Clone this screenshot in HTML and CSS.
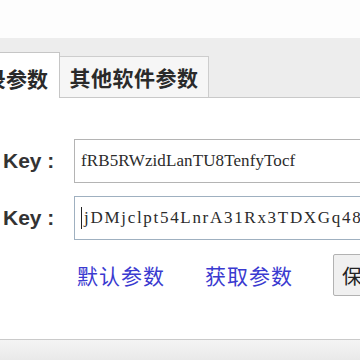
FILE: index.html
```html
<!DOCTYPE html>
<html lang="zh">
<head>
<meta charset="utf-8">
<link rel="stylesheet" href="styles.css">
</head>
<body>
<div class="window">
  <div class="top"></div>
  <div class="tabbar">
    <div class="tab active"><span class="tab-text cut">录参数</span></div>
    <div class="tab"><span class="tab-text">其他软件参数</span></div>
  </div>
  <div class="content">
    <div class="row first">
      <span class="label">Key :</span>
      <div class="field"><span class="value v1">fRB5RWzidLanTU8TenfyTocf</span></div>
    </div>
    <div class="row second">
      <span class="label">Key :</span>
      <div class="field focused"><span class="caret"></span><span class="value v2">jDMjclpt54LnrA31Rx3TDXGq48cYk</span></div>
    </div>
    <div class="actions">
      <a class="link">默认参数</a>
      <a class="link">获取参数</a>
      <span class="btn">保存</span>
    </div>
  </div>
  <div class="bottom"></div>
</div>
</body>
</html>
```

FILE: styles.css
```css
html, body {
  margin: 0;
  padding: 0;
  background: #ffffff;
}
.window {
  width: 360px;
  height: 360px;
  overflow: hidden;
  display: flex;
  flex-direction: column;
  font-family: "Noto Sans CJK SC", "Liberation Sans", sans-serif;
}
.top {
  height: 38px;
  background: #fdfdfd;
  flex: none;
}
.tabbar {
  height: 60px;
  flex: none;
  background: #ededed;
  border-bottom: 1px solid #c9c9c9;
  display: flex;
  align-items: flex-end;
  box-sizing: border-box;
}
.tab {
  box-sizing: border-box;
  display: flex;
  align-items: center;
  justify-content: center;
  height: 41px;
  width: 149px;
  background: #f6f6f6;
  border: 1px solid #cdcdcd;
  border-bottom: none;
  border-left: none;
  overflow: hidden;
}
.tab.active {
  width: 60px;
  height: 46px;
  margin-bottom: -1px;
  background: #ffffff;
  border: 1px solid #c6c6c6;
  border-bottom: none;
  border-left: none;
  justify-content: flex-end;
  padding-right: 11px;
  padding-top: 4px;
}
.tab-text {
  font-size: 21px;
  font-weight: 700;
  color: #2a2a2a;
  white-space: nowrap;
  letter-spacing: 0.5px;
}
.tab-text.cut {
  letter-spacing: 0;
}
.content {
  flex: 1;
  background: #ffffff;
  display: flex;
  flex-direction: column;
}
.row {
  display: flex;
  align-items: center;
  height: 44px;
}
.row.first {
  margin-top: 41px;
}
.row.second {
  margin-top: 13px;
}
.label {
  width: 74px;
  flex: none;
  box-sizing: border-box;
  padding-left: 3px;
  font-family: "Liberation Sans", sans-serif;
  font-size: 21px;
  font-weight: 700;
  color: #333333;
  white-space: nowrap;
}
.field {
  box-sizing: border-box;
  height: 44px;
  width: 320px;
  flex: none;
  border: 1px solid #b4b4b4;
  background: #ffffff;
  display: flex;
  align-items: center;
  padding-left: 6px;
  overflow: hidden;
}
.field.focused {
  border-color: #9fb0c0;
}
.value {
  font-family: "Liberation Serif", serif;
  font-size: 17px;
  color: #2b2b2b;
  white-space: nowrap;
}
.v1 {
  letter-spacing: 0.1px;
}
.v2 {
  letter-spacing: 1.7px;
}
.caret {
  flex: none;
  width: 1px;
  height: 22px;
  background: #222;
  margin-right: 2px;
}
.actions {
  display: flex;
  align-items: center;
  height: 42px;
  margin-top: 14px;
  padding-left: 77px;
}
.link {
  font-size: 21px;
  color: #3a3ad0;
  letter-spacing: 1px;
  white-space: nowrap;
  margin-right: 40px;
}
.btn {
  box-sizing: border-box;
  height: 42px;
  width: 80px;
  flex: none;
  background: #f0f0f0;
  border: 1px solid #b2b2b2;
  border-radius: 2px;
  display: flex;
  align-items: center;
  padding-left: 8px;
  font-size: 20px;
  color: #222;
  white-space: nowrap;
}
.bottom {
  height: 21px;
  flex: none;
  box-sizing: border-box;
  border-top: 1px solid #cacaca;
  background: linear-gradient(#f4f4f4, #e9e9e9);
}
```
